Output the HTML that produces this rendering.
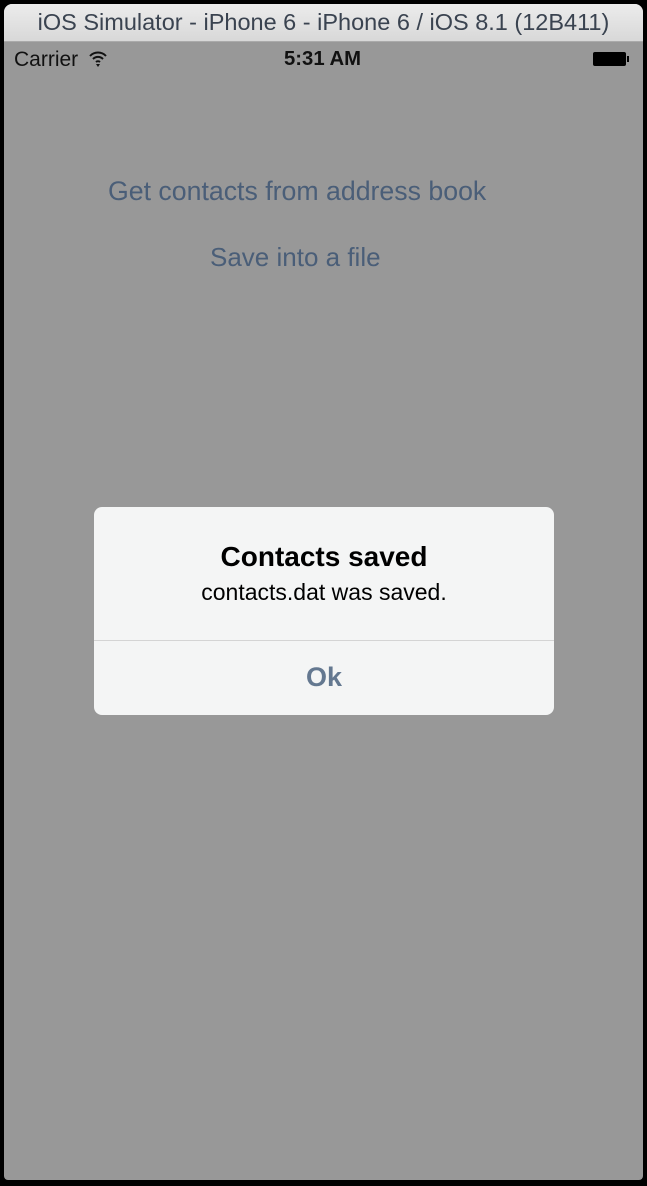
<!DOCTYPE html>
<html><head><style>
body{margin:0;width:647px;height:1186px;background:#000;position:relative;overflow:hidden;font-family:"Liberation Sans",sans-serif}
.win{position:absolute;left:4px;top:4px;width:639px;height:1176px;background:#989898;border-radius:8px 8px 4px 4px;overflow:hidden}
.tb{position:absolute;left:0;top:0;width:639px;height:37px;background:linear-gradient(#ececec,#d8d8d8);border-bottom:1px solid #aaa;text-align:center;line-height:37px;font-size:23.5px;color:#3a4350}
.t{position:absolute;white-space:nowrap}
.alert{position:absolute;left:94px;top:507px;width:460px;height:208px;background:#f4f5f5;border-radius:8px}
</style></head><body>
<div class="win">
<div class="tb">iOS Simulator - iPhone 6 - iPhone 6 / iOS 8.1 (12B411)</div>
</div>
<div class="t" style="left:14px;top:48px;font-size:21px;color:#111">Carrier</div>
<svg style="position:absolute;left:88px;top:51px" width="20" height="16" viewBox="0 0 20 16"><path d="M2 5a11 11 0 0 1 16 0M5 8a7 7 0 0 1 10 0M8 11a3 3 0 0 1 4 0" stroke="#111" stroke-width="2" fill="none"/><path d="M8 13l2 3 2-3z" fill="#111"/></svg>
<div class="t" style="left:284px;top:48px;font-size:20.3px;font-weight:bold;color:#111">5:31 AM</div>
<div style="position:absolute;left:593px;top:52px;width:33px;height:14px;background:#000;border-radius:2px"></div>
<div style="position:absolute;left:627px;top:56px;width:2px;height:6px;background:#000"></div>
<div class="t" style="left:108px;top:176px;font-size:26.7px;color:#4a5e78">Get contacts from address book</div>
<div class="t" style="left:210px;top:242px;font-size:26px;color:#4a5e78">Save into a file</div>
<div class="alert">
<div class="t" style="left:0;width:460px;text-align:center;top:34px;font-size:28px;font-weight:bold;color:#000">Contacts saved</div>
<div class="t" style="left:0;width:460px;text-align:center;top:72px;font-size:23px;color:#000">contacts.dat was saved.</div>
<div style="position:absolute;left:0;top:133px;width:460px;height:1px;background:#d4d4d4"></div>
<div class="t" style="left:0;width:460px;text-align:center;top:155px;font-size:27px;font-weight:bold;color:#647890">Ok</div>
</div>
</body></html>
